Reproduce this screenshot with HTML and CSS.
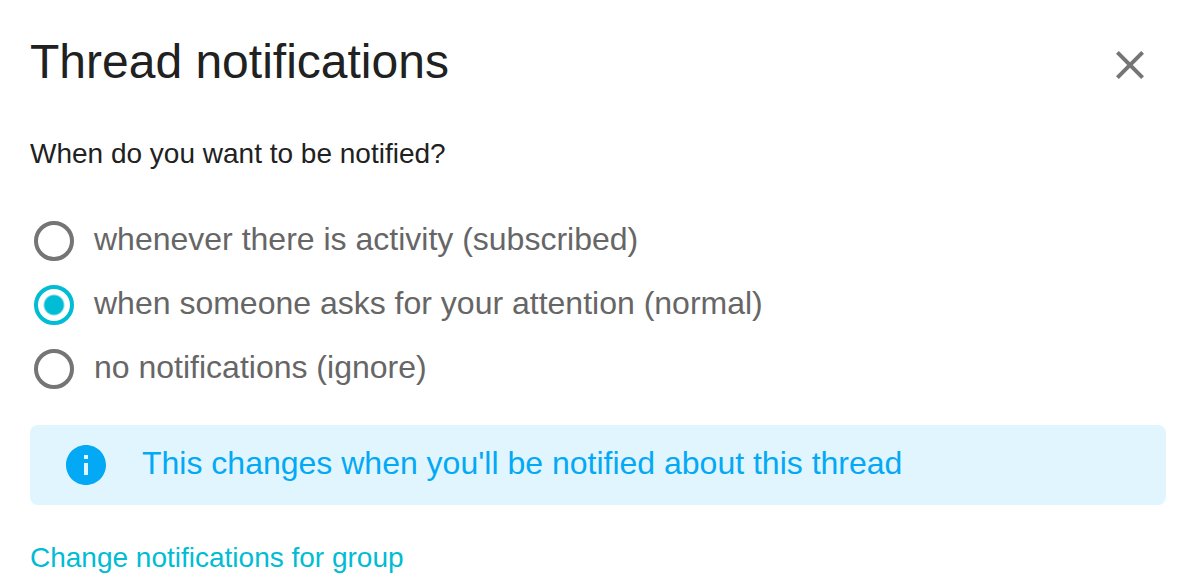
FILE: index.html
```html
<!DOCTYPE html>
<html lang="en">
<head>
<meta charset="utf-8">
<title>Thread notifications</title>
<link rel="stylesheet" href="styles.css">
</head>
<body>
<main class="dialog">
  <header class="header">
    <h1 class="title">Thread notifications</h1>
    <button class="close" type="button" aria-label="Close">
      <svg viewBox="5 5 14 14" width="28" height="28" aria-hidden="true"><path fill="currentColor" d="M19 6.410L17.590 5 12 10.590 6.410 5 5 6.410 10.590 12 5 17.590 6.410 19 12 13.410 17.590 19 19 17.590 13.410 12z"/></svg>
    </button>
  </header>
  <form>
    <fieldset class="options">
      <legend class="question">When do you want to be notified?</legend>
      <label class="option"><input class="radio" type="radio" name="volume"><span class="text">whenever there is activity (subscribed)</span></label>
      <label class="option"><input class="radio" type="radio" name="volume" checked><span class="text">when someone asks for your attention (normal)</span></label>
      <label class="option"><input class="radio" type="radio" name="volume"><span class="text">no notifications (ignore)</span></label>
    </fieldset>
  </form>
  <div class="alert">
    <svg class="info" viewBox="0 0 24 24" width="48" height="48" aria-hidden="true"><path fill="currentColor" d="M12 2C6.480 2 2 6.480 2 12s4.480 10 10 10 10-4.480 10-10S17.520 2 12 2zm1 15h-2v-6h2v6zm0-8h-2V7h2v2z"/></svg>
    <p class="text">This changes when you'll be notified about this thread</p>
  </div>
  <a class="link" href="#group">Change notifications for group</a>
</main>
</body>
</html>
```

FILE: styles.css
```css
* { box-sizing: border-box; }
body {
  margin: 0;
  background: #fff;
  color: #212121;
  font-family: "Liberation Sans", Arial, sans-serif;
}
.dialog { padding: 30px 30px 12px; }
.header {
  display: flex;
  align-items: center;
  justify-content: space-between;
}
.title { margin: 0; font-size: 48px; line-height: 64px; font-weight: 400; }
.close {
  display: flex;
  padding: 8px;
  margin: 6px 14px 0 0;
  border: 0;
  background: none;
  color: #757575;
}
.options { margin: 40px 0 0; padding: 0; border: 0; min-width: 0; }
.question { padding: 0; margin-bottom: 35px; font-size: 28px; line-height: 40px; }
.option {
  display: flex;
  align-items: center;
  gap: 20px;
  padding: 8px 0 8px 4px;
  color: #666;
}
.text {
  margin: 0;
  padding-bottom: 4px;
  font-size: 32px;
  line-height: 44px;
}
.radio {
  appearance: none;
  flex: none;
  width: 40px;
  height: 40px;
  margin: 0;
  border: 4px solid #757575;
  border-radius: 50%;
}
.radio:checked {
  border-color: #00bcd4;
  background: radial-gradient(circle, #00bcd4 9px, transparent 11px);
}
.alert {
  display: flex;
  align-items: center;
  gap: 32px;
  margin-top: 24px;
  padding: 16px 32px;
  border-radius: 8px;
  background: #e1f5fe;
  color: #03a9f4;
}
.info { flex: none; }
.link {
  display: inline-block;
  margin-top: 33px;
  color: #00bcd4;
  font-size: 28px;
  line-height: 40px;
  text-decoration: none;
}
```
